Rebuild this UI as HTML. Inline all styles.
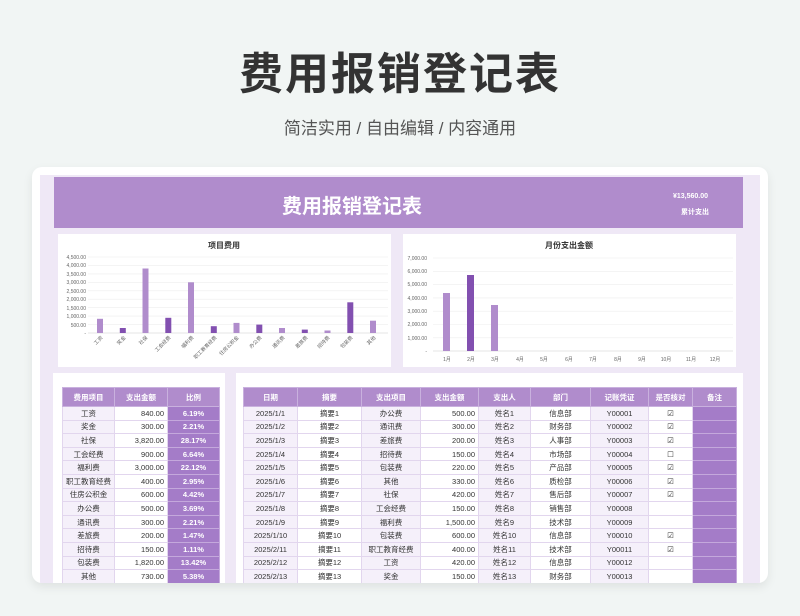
<!DOCTYPE html>
<html><head><meta charset="utf-8"><style>
*{margin:0;padding:0;box-sizing:border-box}
body{width:800px;height:616px;overflow:hidden;background:#f1f5f4;font-family:"Liberation Sans","Noto Sans CJK SC",sans-serif;position:relative}
.t{position:absolute;left:0;width:800px;text-align:center}
.card{position:absolute;left:32px;top:167px;width:736px;height:416px;background:#fff;border-radius:10px;box-shadow:0 4px 10px rgba(0,0,0,.08);overflow:hidden}
.lav{position:absolute;left:8px;top:8px;width:720px;height:408px;background:#efe8f6}
.hdr{position:absolute;left:22px;top:10px;width:689px;height:51px;background:#b08ccc}
.panel{position:absolute;background:#fff}
table{border-collapse:collapse;position:absolute;font-size:7.5px;color:#333}
td,th{height:13.6px;border:1px solid #e2d6ee;text-align:center;padding:0 3px;white-space:nowrap;overflow:hidden}
th{background:#b08ccc;color:#fff;height:19px;border-color:#c9b1de;font-weight:bold}
.g{background:#f5f0fa}
.r{text-align:right}
.p{background:#a47cc8;color:#fff;font-weight:bold;border-color:#c4a8dc}
</style></head><body>
<div class="t" style="top:38px;font-size:44px;font-weight:bold;color:#333;letter-spacing:2px">费用报销登记表</div>
<div class="t" style="top:114px;font-size:17px;color:#555">简洁实用 / 自由编辑 / 内容通用</div>
<div class="card"><div class="lav"></div>
<div class="hdr"><div style="position:absolute;left:228px;top:13px;color:#fff;font-size:20px;font-weight:bold">费用报销登记表</div>
<div style="position:absolute;left:619px;top:16px;color:#fff;font-size:7px;font-weight:bold">¥13,560.00</div>
<div style="position:absolute;left:627px;top:30px;color:#fff;font-size:7px;font-weight:bold">累计支出</div></div>
<div class="panel" style="left:26px;top:67px;width:333px;height:133px">
<svg width="333" height="133" font-size="5" fill="#666">
<text x="166" y="14" text-anchor="middle" font-size="8" font-weight="bold" fill="#333">项目费用</text>
<g stroke="#eee" stroke-width=".6">
<line x1="30" x2="330" y1="23" y2="23"/><line x1="30" x2="330" y1="31.4" y2="31.4"/><line x1="30" x2="330" y1="39.9" y2="39.9"/><line x1="30" x2="330" y1="48.3" y2="48.3"/><line x1="30" x2="330" y1="56.8" y2="56.8"/><line x1="30" x2="330" y1="65.2" y2="65.2"/><line x1="30" x2="330" y1="73.7" y2="73.7"/><line x1="30" x2="330" y1="82.1" y2="82.1"/><line x1="30" x2="330" y1="90.6" y2="90.6"/><line x1="30" x2="330" y1="99" y2="99" stroke="#ccc"/></g>
<g text-anchor="end"><text x="28" y="25">4,500.00</text><text x="28" y="33">4,000.00</text><text x="28" y="42">3,500.00</text><text x="28" y="50">3,000.00</text><text x="28" y="59">2,500.00</text><text x="28" y="67">2,000.00</text><text x="28" y="76">1,500.00</text><text x="28" y="84">1,000.00</text><text x="28" y="93">500.00</text><text x="28" y="101">-</text></g>
<g fill="#b08ccc"><rect x="39" y="84.8" width="6" height="14.2"/><rect x="84.5" y="34.5" width="6" height="64.5"/><rect x="130" y="48.3" width="6" height="50.7"/><rect x="175.5" y="88.9" width="6" height="10.1"/><rect x="221" y="94" width="6" height="5"/><rect x="266.5" y="96.5" width="6" height="2.5"/><rect x="312" y="86.7" width="6" height="12.3"/></g>
<g fill="#8250b0"><rect x="61.8" y="94" width="6" height="5"/><rect x="107.3" y="83.8" width="6" height="15.2"/><rect x="152.8" y="92.2" width="6" height="6.8"/><rect x="198.3" y="90.6" width="6" height="8.4"/><rect x="243.8" y="95.6" width="6" height="3.4"/><rect x="289.3" y="68.3" width="6" height="30.7"/></g>
<g font-size="5">
<text transform="translate(45,104) rotate(-45)" text-anchor="end">工资</text><text transform="translate(68,104) rotate(-45)" text-anchor="end">奖金</text><text transform="translate(90,104) rotate(-45)" text-anchor="end">社保</text><text transform="translate(113,104) rotate(-45)" text-anchor="end">工会经费</text><text transform="translate(136,104) rotate(-45)" text-anchor="end">福利费</text><text transform="translate(159,104) rotate(-45)" text-anchor="end">职工教育经费</text><text transform="translate(181,104) rotate(-45)" text-anchor="end">住房公积金</text><text transform="translate(204,104) rotate(-45)" text-anchor="end">办公费</text><text transform="translate(227,104) rotate(-45)" text-anchor="end">通讯费</text><text transform="translate(250,104) rotate(-45)" text-anchor="end">差旅费</text><text transform="translate(272,104) rotate(-45)" text-anchor="end">招待费</text><text transform="translate(295,104) rotate(-45)" text-anchor="end">包装费</text><text transform="translate(318,104) rotate(-45)" text-anchor="end">其他</text></g>
</svg></div>
<div class="panel" style="left:371px;top:67px;width:333px;height:133px">
<svg width="333" height="133" font-size="5" fill="#666">
<text x="166" y="14" text-anchor="middle" font-size="8" font-weight="bold" fill="#333">月份支出金额</text>
<g stroke="#eee" stroke-width=".6"><line x1="30" x2="330" y1="24" y2="24"/><line x1="30" x2="330" y1="37.3" y2="37.3"/><line x1="30" x2="330" y1="50.6" y2="50.6"/><line x1="30" x2="330" y1="63.9" y2="63.9"/><line x1="30" x2="330" y1="77.2" y2="77.2"/><line x1="30" x2="330" y1="90.5" y2="90.5"/><line x1="30" x2="330" y1="103.8" y2="103.8"/><line x1="30" x2="330" y1="117" y2="117" stroke="#ccc"/></g>
<g text-anchor="end"><text x="24" y="26">7,000.00</text><text x="24" y="39">6,000.00</text><text x="24" y="52">5,000.00</text><text x="24" y="66">4,000.00</text><text x="24" y="79">3,000.00</text><text x="24" y="92">2,000.00</text><text x="24" y="106">1,000.00</text><text x="24" y="119">-</text></g>
<rect x="40" y="59" width="7" height="58" fill="#b08ccc"/><rect x="64" y="41" width="7" height="76" fill="#8250b0"/><rect x="88" y="71" width="7" height="46" fill="#b08ccc"/>
<g text-anchor="middle"><text x="44" y="127">1月</text><text x="68" y="127">2月</text><text x="92" y="127">3月</text><text x="117" y="127">4月</text><text x="141" y="127">5月</text><text x="166" y="127">6月</text><text x="190" y="127">7月</text><text x="215" y="127">8月</text><text x="239" y="127">9月</text><text x="263" y="127">10月</text><text x="288" y="127">11月</text><text x="312" y="127">12月</text></g>
</svg></div>
<div class="panel" style="left:21px;top:206px;width:172px;height:212px">
<table style="left:9px;top:14px;width:158px">
<tr><th style="width:52px">费用项目</th><th style="width:53px">支出金额</th><th>比例</th></tr>
<tr><td class="g">工资</td><td class="r">840.00</td><td class="p">6.19%</td></tr>
<tr><td class="g">奖金</td><td class="r">300.00</td><td class="p">2.21%</td></tr>
<tr><td class="g">社保</td><td class="r">3,820.00</td><td class="p">28.17%</td></tr>
<tr><td class="g">工会经费</td><td class="r">900.00</td><td class="p">6.64%</td></tr>
<tr><td class="g">福利费</td><td class="r">3,000.00</td><td class="p">22.12%</td></tr>
<tr><td class="g">职工教育经费</td><td class="r">400.00</td><td class="p">2.95%</td></tr>
<tr><td class="g">住房公积金</td><td class="r">600.00</td><td class="p">4.42%</td></tr>
<tr><td class="g">办公费</td><td class="r">500.00</td><td class="p">3.69%</td></tr>
<tr><td class="g">通讯费</td><td class="r">300.00</td><td class="p">2.21%</td></tr>
<tr><td class="g">差旅费</td><td class="r">200.00</td><td class="p">1.47%</td></tr>
<tr><td class="g">招待费</td><td class="r">150.00</td><td class="p">1.11%</td></tr>
<tr><td class="g">包装费</td><td class="r">1,820.00</td><td class="p">13.42%</td></tr>
<tr><td class="g">其他</td><td class="r">730.00</td><td class="p">5.38%</td></tr>
</table></div>
<div class="panel" style="left:204px;top:206px;width:507px;height:212px">
<table style="left:7px;top:14px;width:494px">
<tr><th style="width:54px">日期</th><th style="width:64px">摘要</th><th style="width:59px">支出项目</th><th style="width:58px">支出金额</th><th style="width:52px">支出人</th><th style="width:60px">部门</th><th style="width:58px">记账凭证</th><th style="width:44px">是否核对</th><th>备注</th></tr>
<tr><td class="g">2025/1/1</td><td>摘要1</td><td class="g">办公费</td><td class="r">500.00</td><td class="g">姓名1</td><td>信息部</td><td class="g">Y00001</td><td>☑</td><td class="p"></td></tr>
<tr><td class="g">2025/1/2</td><td>摘要2</td><td class="g">通讯费</td><td class="r">300.00</td><td class="g">姓名2</td><td>财务部</td><td class="g">Y00002</td><td>☑</td><td class="p"></td></tr>
<tr><td class="g">2025/1/3</td><td>摘要3</td><td class="g">差旅费</td><td class="r">200.00</td><td class="g">姓名3</td><td>人事部</td><td class="g">Y00003</td><td>☑</td><td class="p"></td></tr>
<tr><td class="g">2025/1/4</td><td>摘要4</td><td class="g">招待费</td><td class="r">150.00</td><td class="g">姓名4</td><td>市场部</td><td class="g">Y00004</td><td>☐</td><td class="p"></td></tr>
<tr><td class="g">2025/1/5</td><td>摘要5</td><td class="g">包装费</td><td class="r">220.00</td><td class="g">姓名5</td><td>产品部</td><td class="g">Y00005</td><td>☑</td><td class="p"></td></tr>
<tr><td class="g">2025/1/6</td><td>摘要6</td><td class="g">其他</td><td class="r">330.00</td><td class="g">姓名6</td><td>质检部</td><td class="g">Y00006</td><td>☑</td><td class="p"></td></tr>
<tr><td class="g">2025/1/7</td><td>摘要7</td><td class="g">社保</td><td class="r">420.00</td><td class="g">姓名7</td><td>售后部</td><td class="g">Y00007</td><td>☑</td><td class="p"></td></tr>
<tr><td class="g">2025/1/8</td><td>摘要8</td><td class="g">工会经费</td><td class="r">150.00</td><td class="g">姓名8</td><td>销售部</td><td class="g">Y00008</td><td></td><td class="p"></td></tr>
<tr><td class="g">2025/1/9</td><td>摘要9</td><td class="g">福利费</td><td class="r">1,500.00</td><td class="g">姓名9</td><td>技术部</td><td class="g">Y00009</td><td></td><td class="p"></td></tr>
<tr><td class="g">2025/1/10</td><td>摘要10</td><td class="g">包装费</td><td class="r">600.00</td><td class="g">姓名10</td><td>信息部</td><td class="g">Y00010</td><td>☑</td><td class="p"></td></tr>
<tr><td class="g">2025/2/11</td><td>摘要11</td><td class="g">职工教育经费</td><td class="r">400.00</td><td class="g">姓名11</td><td>技术部</td><td class="g">Y00011</td><td>☑</td><td class="p"></td></tr>
<tr><td class="g">2025/2/12</td><td>摘要12</td><td class="g">工资</td><td class="r">420.00</td><td class="g">姓名12</td><td>信息部</td><td class="g">Y00012</td><td></td><td class="p"></td></tr>
<tr><td class="g">2025/2/13</td><td>摘要13</td><td class="g">奖金</td><td class="r">150.00</td><td class="g">姓名13</td><td>财务部</td><td class="g">Y00013</td><td></td><td class="p"></td></tr>
</table></div>
</div>
</body></html>
